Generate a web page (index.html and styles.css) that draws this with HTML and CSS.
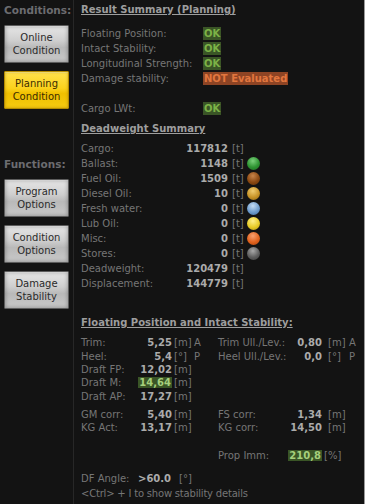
FILE: index.html
```html
<!DOCTYPE html>
<html lang="en">
<head>
  <meta charset="UTF-8" />
  <meta name="viewport" content="width=device-width, initial-scale=1.0" />
  <title>Result Summary</title>
  <link rel="stylesheet" href="styles.css">
</head>
<body>
  <div class="app">

    <aside class="side">
      <div class="side-title">Conditions:</div>
      <button class="btn">Online<br>Condition</button>
      <button class="btn btn-active">Planning<br>Condition</button>

      <div class="side-title functions">Functions:</div>
      <button class="btn">Program<br>Options</button>
      <button class="btn">Condition<br>Options</button>
      <button class="btn">Damage<br>Stability</button>
    </aside>

    <main class="main">
      <h2 class="head">Result Summary (Planning)</h2>
      <div class="status">
        <span>Floating Position:</span><span><b class="ok">OK</b></span>
        <span>Intact Stability:</span><span><b class="ok">OK</b></span>
        <span>Longitudinal Strength:</span><span><b class="ok">OK</b></span>
        <span>Damage stability:</span><span><b class="bad">NOT Evaluated</b></span>
        <span></span><span></span>
        <span>Cargo LWt:</span><span><b class="ok">OK</b></span>
      </div>

      <h2 class="head dw-head">Deadweight Summary</h2>
      <div class="dw">
        <span>Cargo:</span><b>117812</b><span class="unit">[t]</span><i></i>
        <span>Ballast:</span><b>1148</b><span class="unit">[t]</span><i class="dot green"></i>
        <span>Fuel Oil:</span><b>1509</b><span class="unit">[t]</span><i class="dot brown"></i>
        <span>Diesel Oil:</span><b>10</b><span class="unit">[t]</span><i class="dot gold"></i>
        <span>Fresh water:</span><b>0</b><span class="unit">[t]</span><i class="dot blue"></i>
        <span>Lub Oil:</span><b>0</b><span class="unit">[t]</span><i class="dot yellow"></i>
        <span>Misc:</span><b>0</b><span class="unit">[t]</span><i class="dot orange"></i>
        <span>Stores:</span><b>0</b><span class="unit">[t]</span><i class="dot grey"></i>
        <span>Deadweight:</span><b>120479</b><span class="unit">[t]</span><i></i>
        <span>Displacement:</span><b>144779</b><span class="unit">[t]</span><i></i>
      </div>

      <h2 class="head fp-head">Floating Position and Intact Stability:</h2>
      <div class="fp">
        <span>Trim:</span><b>5,25</b><span class="unit">[m]</span><span class="dir">A</span>
        <span>Trim Ull./Lev.:</span><b>0,80</b><span class="unit u2">[m]</span><span class="dir">A</span>

        <span>Heel:</span><b>5,4</b><span class="unit">[°]</span><span class="dir">P</span>
        <span>Heel Ull./Lev.:</span><b>0,0</b><span class="unit u2">[°]</span><span class="dir">P</span>

        <span>Draft FP:</span><b>12,02</b><span class="unit">[m]</span><span class="rest"></span>
        <span>Draft M:</span><b><em class="hl">14,64</em></b><span class="unit">[m]</span><span class="rest"></span>
        <span>Draft AP:</span><b>17,27</b><span class="unit">[m]</span><span class="rest"></span>
      </div>

      <div class="fp corr">
        <span>GM corr:</span><b>5,40</b><span class="unit">[m]</span><span></span>
        <span>FS corr:</span><b>1,34</b><span class="unit u2">[m]</span><span></span>

        <span>KG Act:</span><b>13,17</b><span class="unit">[m]</span><span></span>
        <span>KG corr:</span><b>14,50</b><span class="unit u2">[m]</span><span></span>
      </div>

      <div class="fp prop">
        <span></span><span></span><span></span><span></span>
        <span>Prop Imm:</span><b><em class="hl">210,8</em></b><span class="unit">[%]</span><span></span>
      </div>

      <div class="df">
        <span class="df-label">DF Angle:</span><b>&gt;60.0</b><span class="unit">[°]</span>
      </div>
      <div class="hint">&lt;Ctrl&gt; + I to show stability details</div>
    </main>

  </div>
</body>
</html>
```

FILE: styles.css
```css
* {
  box-sizing: border-box;
}

body {
  margin: 0;
  background-color: #131313;
  font-family: 'DejaVu Sans', sans-serif;
  font-size: 10px;
  color: #767676;
}

.app {
  display: flex;
  width: 365px;
  height: 504px;
  border-right: 1px solid #9a9a9a;
}

/* left column */
.side {
  width: 74px;
  flex-shrink: 0;
  border-right: 1px solid #272727;
  padding: 3px 0 0 4px;
}

.side-title {
  font-weight: bold;
  font-size: 10.5px;
  line-height: 14px;
  color: #6c6c70;
}

.side-title.functions {
  margin-top: 48px;
}

.btn {
  display: block;
  width: 65px;
  height: 38px;
  margin-top: 8px;
  padding: 0;
  font-family: 'DejaVu Sans', sans-serif;
  font-size: 10px;
  line-height: 13px;
  color: #2a2a2a;
  border: 1px solid #5c5c5c;
  border-radius: 1px;
  background: linear-gradient(#e6e6e6, #cfcfcf 40%, #b9b9b9 60%, #c9c9c9);
  box-shadow: inset 0 0 4px rgba(0, 0, 0, 0.35), inset 0 1px 0 #f4f4f4;
}

.btn-active {
  color: #3a2c00;
  border-color: #b58c00;
  background: linear-gradient(#ffe24d, #fbd21c 45%, #f0c000 60%, #f6cb10);
  box-shadow: inset 0 0 3px rgba(120, 80, 0, 0.45), inset 0 1px 0 #fff08a;
}

/* right column */
.main {
  flex: 1;
  padding: 3px 0 0 7px;
}

.head {
  margin: 0;
  font-size: 10px;
  font-weight: bold;
  line-height: 14px;
  color: #9e9e9e;
  text-decoration: underline;
}

b {
  font-weight: bold;
  color: #ababab;
}

.status {
  display: grid;
  grid-template-columns: 122px auto;
  grid-auto-rows: 15px;
  align-items: center;
  margin-top: 8.5px;
}

.ok, .bad {
  display: inline-block;
  padding: 0 1px;
  line-height: 13px;
}

.ok {
  background-color: #3a5526;
  color: #7cb246;
}

.bad {
  background-color: #8e4424;
  color: #e2763e;
}

.dw-head {
  margin-top: 6.5px;
}

.dw {
  display: grid;
  grid-template-columns: 100px 47px 19px 13px;
  grid-auto-rows: 15px;
  align-items: center;
  margin-top: 4.5px;
}

.dw b {
  text-align: right;
}

.unit {
  padding-left: 4px;
}

.dot {
  display: block;
  width: 13px;
  height: 13px;
  border-radius: 50%;
}

.green  { background: radial-gradient(circle at 45% 30%, #7ad07a, #2e9432 55%, #1c6a20); }
.brown  { background: radial-gradient(circle at 45% 30%, #c8844a, #8a4812 55%, #5e2e06); }
.gold   { background: radial-gradient(circle at 45% 30%, #f0cc70, #c89428 55%, #8c6410); }
.blue   { background: radial-gradient(circle at 45% 30%, #c4dcf4, #6e9ccc 55%, #3e6a9c); }
.yellow { background: radial-gradient(circle at 45% 30%, #fff08a, #e8cc28 55%, #b09410); }
.orange { background: radial-gradient(circle at 45% 30%, #f8a070, #e0621e 55%, #a8420c); }
.grey   { background: radial-gradient(circle at 45% 30%, #a8a8a8, #5e5e5e 55%, #3a3a3a); }

.fp-head {
  margin-top: 25.5px;
}

.fp {
  display: grid;
  grid-template-columns: 55px 36px 19px 27px 70px 34px 24px auto;
  grid-auto-rows: 13.3px;
  align-items: center;
  margin-top: 6.3px;
}

.fp b {
  text-align: right;
}

.fp .unit {
  padding-left: 2px;
}

.fp .u2 {
  padding-left: 6px;
}

.dir {
  padding-left: 3px;
}

.rest {
  grid-column: span 5;
}

.hl {
  font-style: normal;
  padding: 0 1px;
  background-color: #3a5526;
  color: #a6cf7c;
}

.corr {
  grid-auto-rows: 13px;
  margin-top: 5.7px;
}

.prop {
  margin-top: 14px;
}

.prop .unit {
  padding-left: 2px;
}

.df {
  display: flex;
  align-items: center;
  height: 16px;
  margin-top: 8.5px;
}

.df-label {
  width: 57px;
}

.df b {
  width: 33px;
}

.df .unit {
  padding-left: 8px;
}

.hint {
  line-height: 16px;
  letter-spacing: -0.2px;
}
```
